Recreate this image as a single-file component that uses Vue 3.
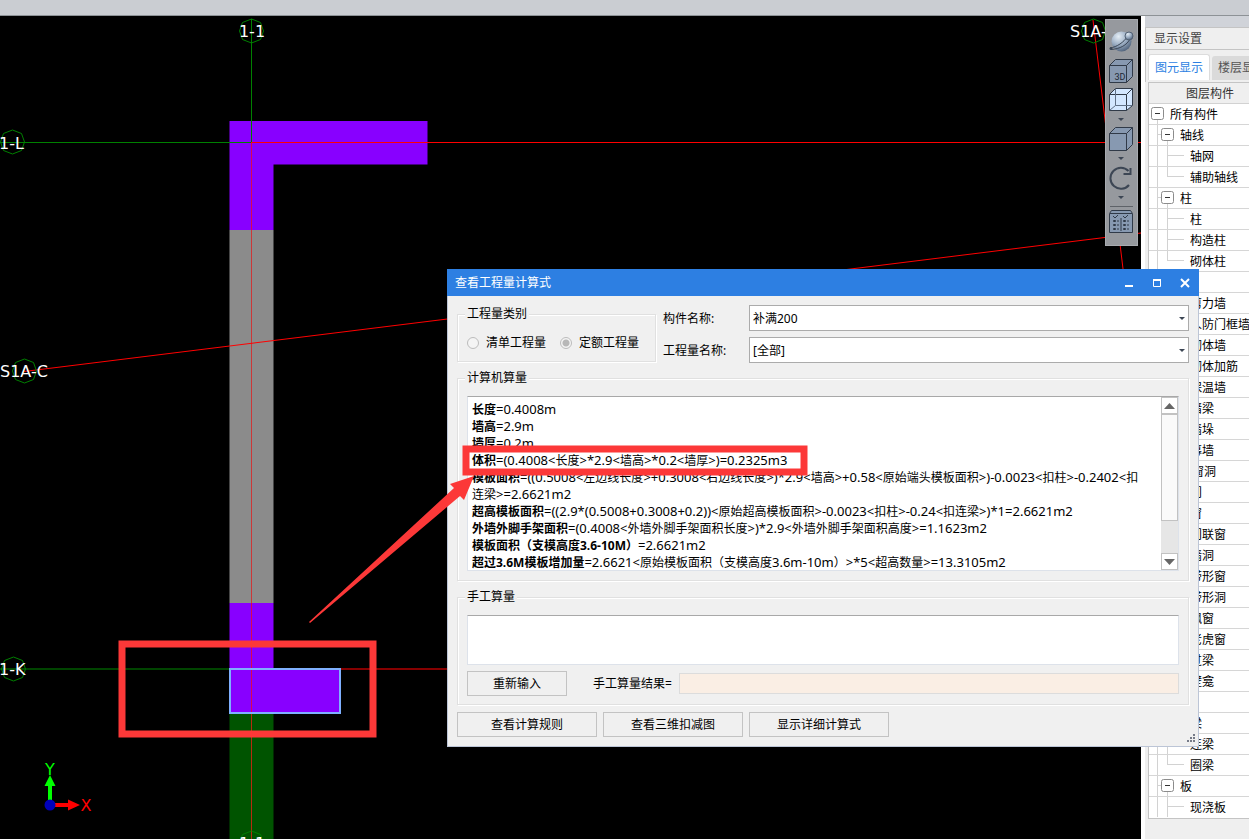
<script setup>
import { ref } from 'vue'

const kind = ref('quota')
const component = ref('补满200')
const quantity = ref('[全部]')

const groups = [
  ['轴线', ['轴网', '辅助轴线']],
  ['柱', ['柱', '构造柱', '砌体柱']],
  ['墙', ['剪力墙', '人防门框墙', '砌体墙', '砌体加筋', '保温墙', '暗梁', '墙垛', '幕墙']],
  ['门窗洞', ['门', '窗', '门联窗', '墙洞', '带形窗', '带形洞', '飘窗', '老虎窗', '过梁', '壁龛']],
  ['梁', ['梁', '连梁', '圈梁']],
  ['板', ['现浇板']],
]

const rows = [{ level: 0, name: '所有构件' }]
groups.forEach(([name, children], g) => {
  rows.push({ level: 1, name })
  children.forEach((child, i) => {
    const last = i === children.length - 1 && g !== groups.length - 1
    rows.push({ level: 2, name: child, last })
  })
})

// Expressions are cut into Latin and Chinese runs, which are set in different sizes.
const split = (text) => text.match(/[\x20-\x7e]+|[^\x20-\x7e]+/g).map((run) => ({
  run,
  latin: run.charCodeAt(0) < 127,
}))

const formulas = [
  ['长度', '=0.4008m'],
  ['墙高', '=2.9m'],
  ['墙厚', '=0.2m'],
  ['体积', '=(0.4008<长度>*2.9<墙高>*0.2<墙厚>)=0.2325m3'],
  ['模板面积', '=((0.5008<左边线长度>+0.3008<右边线长度>)*2.9<墙高>+0.58<原始端头模板面积>)-0.0023<扣柱>-0.2402<扣连梁>=2.6621m2'],
  ['超高模板面积', '=((2.9*(0.5008+0.3008+0.2))<原始超高模板面积>-0.0023<扣柱>-0.24<扣连梁>)*1=2.6621m2'],
  ['外墙外脚手架面积', '=(0.4008<外墙外脚手架面积长度>)*2.9<外墙外脚手架面积高度>=1.1623m2'],
  ['模板面积（支模高度3.6-10M）', '=2.6621m2'],
  ['超过3.6M模板增加量', '=2.6621<原始模板面积（支模高度3.6m-10m）>*5<超高数量>=13.3105m2'],
].map(([name, text]) => ({ name, runs: split(text) }))
</script>

<template>
  <div class="app">
    <header class="ribbon"></header>
    <div class="workspace">
      <main class="viewport">
        <svg class="drawing" width="1141" height="823" viewBox="0 16 1141 823">
          <g class="walls">
            <path fill="#8800ff" d="M229.500 121H427.500V164.500H273.500V230H229.500Z" />
            <path fill="#8b8b8b" d="M229.500 230h44v373h-44Z" />
            <path fill="#8800ff" d="M229.500 603h44v66h-44Z" />
            <path fill="#005400" d="M229.500 713h44v126h-44Z" />
            <rect x="230" y="669" width="110" height="44" fill="#8800ff" />
          </g>
          <g fill="none" stroke-width="1">
            <path stroke="#008000" d="M251.500 19V142.500M0 142.500H251" />
            <path stroke="#004400" d="M0 669H230" stroke-width="2" />
            <path stroke="#ff0000" d="M251 142.500H1141" />
            <path stroke="#d80850" d="M251.500 143V230M251.500 603V713" />
            <path stroke="#cc3838" d="M251.500 230V603" />
            <path stroke="#b82a10" d="M251.500 713V839" />
            <path stroke="#860000" stroke-width="2" d="M340 669H1141" />
            <path stroke="#ff0000" d="M1093 20L1124 277M24 371.500L1141 233" />
          </g>
          <rect x="230" y="669" width="110" height="44" fill="none" stroke="#7fb0ff" stroke-width="2" />
          <g fill="none" stroke="#008000">
            <path id="bubble" d="M251.500 19l9 3.500l3 8.500l-3 8.500l-9 3.500l-9-3.500l-3-8.500l3-8.500Z" />
            <use href="#bubble" x="-239" y="111" />
            <use href="#bubble" x="-227" y="340" />
            <use href="#bubble" x="-238" y="638" />
            <use href="#bubble" x="842" y="0" />
            <use href="#bubble" x="0" y="812" />
          </g>
          <g class="axis-text">
            <text x="252" y="37" text-anchor="middle">1-1</text>
            <text x="-1" y="149">1-L</text>
            <text x="0" y="377">S1A-C</text>
            <text x="-1" y="675">1-K</text>
            <text x="1070" y="37">S1A-C</text>
            <text x="252" y="849" text-anchor="middle">1-1</text>
          </g>
          <path fill="#00ff00" d="M48 801V786H44.500L50 775L55.500 786H52V801Z" />
          <path fill="#ff0000" d="M55 803H68V799.500L80 805L68 810.500V807H55Z" />
          <circle cx="50" cy="805" r="5.500" fill="#0000bb" />
          <text class="ucs" x="50" y="775" text-anchor="middle" fill="#00ff00">Y</text>
          <text class="ucs" x="86" y="811" text-anchor="middle" fill="#ff0000">X</text>
        </svg>

        <nav class="tools">
          <button type="button" aria-label="动态观察">
            <svg width="26" height="26" viewBox="0 0 26 26">
              <defs>
                <radialGradient id="ball" cx=".35" cy=".25" r=".8">
                  <stop offset="0" stop-color="#e4edf5" />
                  <stop offset=".5" stop-color="#9fb1c6" />
                  <stop offset="1" stop-color="#4c5f78" />
                </radialGradient>
              </defs>
              <circle cx="13.500" cy="13.500" r="10" fill="url(#ball)" />
              <path d="M2 20C9 19 16 14 19 9M3 21.500C12 21 19 17 22 11" fill="none" stroke="#3b4757" />
              <circle cx="21" cy="8" r="4" fill="url(#ball)" stroke="#526174" />
              <circle cx="3" cy="20.500" r="1.500" fill="#3b4757" />
            </svg>
          </button>
          <button type="button" aria-label="三维">
            <svg width="26" height="26" viewBox="0 0 26 26">
              <path d="M1.500 7.500L7.500 1.500H24.500V18.500L18.500 24.500H1.500Z" fill="#8799b1" stroke="#303a48" />
              <path d="M1.500 7.500H18.500V24.500M18.500 7.500L24.500 1.500" fill="none" stroke="#303a48" />
              <text x="12" y="22" class="cube-text">3D</text>
            </svg>
          </button>
          <button type="button" class="drop" aria-label="线框">
            <svg width="26" height="26" viewBox="0 0 26 26">
              <path d="M1.500 7.500L7.500 1.500H24.500V18.500L18.500 23.500H1.500Z" fill="#d3e7ff" stroke="#303a48" />
              <path d="M1.500 7.500H18.500V23.500M18.500 7.500L24.500 1.500" fill="none" stroke="#303a48" />
              <path d="M7.500 2V18.500H24M7.500 18.500L2 23" fill="none" stroke="#607086" />
            </svg>
            <i class="caret"></i>
          </button>
          <button type="button" class="drop" aria-label="实体">
            <svg width="26" height="26" viewBox="0 0 26 26">
              <path d="M1.500 7.500L7.500 1.500H24.500V18.500L18.500 24.500H1.500Z" fill="#8799b1" stroke="#303a48" />
              <path d="M1.500 7.500H18.500V24.500M18.500 7.500L24.500 1.500" fill="none" stroke="#303a48" />
            </svg>
            <i class="caret"></i>
          </button>
          <button type="button" class="drop" aria-label="旋转">
            <svg width="26" height="26" viewBox="0 0 26 26">
              <path d="M21 20A10.500 10.500 0 1 1 20.500 6" fill="none" stroke="#3c4654" stroke-width="2" />
              <path d="M22.500 3V9H15.500" fill="none" stroke="#3c4654" stroke-width="2" />
            </svg>
            <i class="caret"></i>
          </button>
          <hr>
          <button type="button" aria-label="显示设置">
            <svg width="26" height="26" viewBox="0 0 26 26">
              <path d="M1.500 4.500L3.500 1.500H22.500L24.500 4.500V23.500H1.500Z" fill="#8799b1" stroke="#303a48" />
              <path d="M2 4.500H24M13 9V22" stroke="#303a48" />
              <path d="M5 7l2 2l3-3M15 7l2 2l3-3" fill="none" stroke="#303a48" />
              <path d="M5.500 11.500h2v1h-2ZM5.500 15.500h2v1h-2ZM5.500 19.500h2v1h-2ZM15.500 11.500h2v1h-2ZM15.500 15.500h2v1h-2ZM15.500 19.500h2v1h-2ZM9 12h2M9 16h2M9 20h2M19 12h2M19 16h2M19 20h2" fill="none" stroke="#303a48" />
            </svg>
          </button>
        </nav>
      </main>

      <aside class="panel">
        <div class="strip"></div>
        <h2>显示设置</h2>
        <div class="tabs" role="tablist">
          <button type="button" role="tab" class="tab active" aria-selected="true">图元显示</button>
          <button type="button" role="tab" class="tab" aria-selected="false">楼层显示</button>
        </div>
        <div class="tree">
          <div class="tree-head">图层构件</div>
          <ul>
            <li v-for="(row, i) in rows" :key="i">
              <svg v-if="row.level === 0" width="20" height="20">
                <path d="M8.500 16V20" />
                <rect x="2.500" y="3.500" width="12" height="12" rx="2" />
                <path class="minus" d="M6 9.500H11" />
              </svg>
              <svg v-else-if="row.level === 1" width="30" height="20">
                <path d="M8.500 0V20M8.500 9.500H12M18.500 16V20" />
                <rect x="12.500" y="3.500" width="12" height="12" rx="2" />
                <path class="minus" d="M16 9.500H21" />
              </svg>
              <svg v-else width="40" height="20">
                <path d="M8.500 0V20M18.500 9.500H35" />
                <path :d="row.last ? 'M18.5 0V10' : 'M18.5 0V20'" />
              </svg>
              <span>{{ row.name }}</span>
            </li>
          </ul>
        </div>
      </aside>
    </div>

    <section class="dialog" role="dialog" aria-labelledby="dialog-title">
      <div class="titlebar">
        <h1 id="dialog-title">查看工程量计算式</h1>
        <button type="button" aria-label="最小化"><svg width="12" height="12"><path d="M2 9H10" stroke-width="2" /></svg></button>
        <button type="button" aria-label="最大化"><svg width="12" height="12"><path d="M2.500 3V9.500H9.500V3" /><path d="M2 3H10" stroke-width="2" /></svg></button>
        <button type="button" aria-label="关闭"><svg width="12" height="12"><path d="M2 2L10 10M10 2L2 10" stroke-width="2" /></svg></button>
      </div>
      <div class="body">
        <div class="top">
          <fieldset class="kinds">
            <legend>工程量类别</legend>
            <div class="radios">
              <label><input v-model="kind" type="radio" name="kind" value="list" disabled>清单工程量</label>
              <label><input v-model="kind" type="radio" name="kind" value="quota" disabled>定额工程量</label>
            </div>
          </fieldset>
          <div class="fields">
            <label for="component">构件名称:</label>
            <div class="select">
              <select id="component" v-model="component"><option>补满200</option></select>
              <i class="caret"></i>
            </div>
            <label for="quantity">工程量名称:</label>
            <div class="select">
              <select id="quantity" v-model="quantity"><option>[全部]</option></select>
              <i class="caret"></i>
            </div>
          </div>
        </div>

        <fieldset>
          <legend>计算机算量</legend>
          <div class="result">
            <div class="lines">
              <p v-for="line in formulas" :key="line.name"><b>{{ line.name }}</b><span v-for="(part, i) in line.runs" :key="i" :class="{ latin: part.latin }">{{ part.run }}</span></p>
            </div>
            <div class="scroll">
              <button type="button" aria-label="向上滚动"><svg width="11" height="6"><path d="M0 6L5.500 0L11 6Z" /></svg></button>
              <div class="thumb"></div>
              <div class="track"></div>
              <button type="button" aria-label="向下滚动"><svg width="11" height="6"><path d="M0 0L5.500 6L11 0Z" /></svg></button>
            </div>
          </div>
        </fieldset>

        <fieldset class="manual">
          <legend>手工算量</legend>
          <textarea aria-label="手工算量"></textarea>
          <div class="manual-row">
            <button type="button" class="btn small">重新输入</button>
            <label for="manual-result">手工算量结果=</label>
            <input id="manual-result" type="text" readonly>
          </div>
        </fieldset>

        <div class="actions">
          <button type="button" class="btn">查看计算规则</button>
          <button type="button" class="btn">查看三维扣减图</button>
          <button type="button" class="btn">显示详细计算式</button>
        </div>
      </div>
      <svg class="grip" width="10" height="10"><path d="M7 0h2v2h-2ZM4 3h2v2h-2ZM7 3h2v2h-2ZM1 6h2v2h-2ZM4 6h2v2h-2ZM7 6h2v2h-2Z" fill="#767b88" /></svg>
    </section>

    <svg class="markup" width="1249" height="839" viewBox="0 0 1249 839">
      <g fill="none" stroke="#fc3838" stroke-width="7">
        <rect x="122" y="644" width="251" height="90" />
        <rect x="466" y="449" width="338" height="23" />
      </g>
      <path fill="#fc3838" d="M309 622L454 488L450 484L474 476L464 500L460 496L310 623Z" />
    </svg>
  </div>
</template>

<style>
body {
  margin: 0;
  overflow: hidden;
}
</style>

<style scoped>
.app {
  position: relative;
  display: flex;
  flex-direction: column;
  height: 100vh;
  overflow: hidden;
  background: #000;
  color: #000;
  font: 12px/18px "Noto Sans", "Noto Sans CJK SC", sans-serif;
}
* {
  box-sizing: border-box;
}
button, input, select, textarea {
  margin: 0;
  font: inherit;
  color: inherit;
}
.ribbon {
  flex: none;
  height: 16px;
  background: #cacdd2;
  border-bottom: 1px solid #8d9296;
}
.workspace {
  display: flex;
  flex: 1;
  min-height: 0;
}
.viewport {
  position: relative;
  flex: 1;
  min-width: 0;
  overflow: hidden;
}
.drawing {
  display: block;
}
.axis-text {
  fill: #fff;
  font: 16px "DejaVu Sans", sans-serif;
}
.ucs {
  font: 16px "DejaVu Sans", sans-serif;
}
.tools {
  position: absolute;
  top: 3px;
  right: 3px;
  width: 33px;
  padding: 7px 2px 7px 0;
  background: #96999e;
  border: 1px solid #a8abb0;
}
.tools button {
  display: flex;
  flex-direction: column;
  align-items: center;
  width: 100%;
  padding: 1px 0 3px;
  background: none;
  border: 0;
}
.tools .drop {
  padding-top: 0;
}
.tools svg {
  display: block;
}
.tools hr {
  margin: 2px 2px 1px 4px;
  border: 0;
  border-top: 1px solid #5e6268;
}
.caret {
  border: 3px solid transparent;
  border-top-color: #3c4654;
  border-bottom: 0;
}
.tools .caret {
  margin: 5px 0 2px;
}
.cube-text {
  font: 9px Roboto, sans-serif;
  text-anchor: middle;
  fill: #202833;
}
.panel {
  flex: none;
  width: 108px;
  overflow: hidden;
  background: #efefef;
  border-left: 4px solid #fff;
  white-space: nowrap;
}
.strip {
  height: 11px;
  background: #d0d3d9;
}
.panel h2 {
  margin: 0;
  padding: 0 8px;
  border: solid #c4c4c4;
  border-width: 1px 0 1px 1px;
  font-size: 12px;
  font-weight: 400;
  line-height: 21px;
  color: #444;
}
.tabs {
  display: flex;
  align-items: flex-end;
  gap: 2px;
  height: 32px;
  padding: 4px 0 2px 2px;
  border-left: 1px solid #c4c4c4;
}
.tab {
  flex: none;
  height: 24px;
  padding: 0 6px;
  background: #dadada;
  border: 0;
  border-radius: 3px 3px 0 0;
  color: #555;
}
.tab.active {
  height: 26px;
  background: #fff;
  border: 1px solid #dcdcdc;
  border-bottom: 0;
  color: #2d7fe2;
}
.tree {
  margin-left: 3px;
  border: solid #c4c4c4;
  border-width: 1px 0 1px 1px;
  background: #fff;
}
.tree-head {
  height: 21px;
  padding-left: 37px;
  background: #efefef;
  border-bottom: 1px solid #d2d2d2;
  line-height: 21px;
  color: #333;
}
.tree ul {
  margin: 0;
  padding: 0;
  list-style: none;
}
.tree li {
  display: flex;
  gap: 1px;
  height: 21px;
  border-bottom: 1px solid #d6d6d6;
  line-height: 22px;
}
.tree li:last-child {
  border-bottom: 0;
}
.tree li svg {
  flex: none;
  fill: none;
  stroke: #d2d2d2;
}
.tree li rect {
  fill: #fff;
  stroke: #8c8c8c;
}
.tree li .minus {
  stroke: #333;
}
.dialog {
  position: absolute;
  top: 269px;
  left: 447px;
  width: 752px;
  background: #f0f0f0;
  border: 1px solid #bcc5d6;
  border-top: 0;
}
.titlebar {
  display: flex;
  align-items: center;
  gap: 16px;
  height: 27px;
  margin: 0 -1px;
  padding: 0 8px;
  background: #2d7fe2;
  color: #fff;
}
.titlebar h1 {
  flex: 1;
  margin: 0;
  font-size: 12px;
  font-weight: 400;
}
.titlebar button {
  display: flex;
  padding: 0;
  background: none;
  border: 0;
}
.titlebar svg {
  fill: none;
  stroke: #fff;
}
.body {
  display: flex;
  flex-direction: column;
  gap: 7px;
  padding: 9px;
}
.top {
  display: flex;
  gap: 7px;
  height: 57px;
}
fieldset {
  min-width: 0;
  margin: 0;
  padding: 9px;
  border: 1px solid #e0e0e0;
  box-shadow: inset 1px 1px #fff, 1px 1px #fff;
}
legend {
  height: 18px;
  margin-left: -2px;
  padding: 0 2px;
  background: #f0f0f0;
}
.kinds {
  flex: none;
  width: 199px;
  height: 57px;
  padding: 0 9px;
}
.radios {
  display: flex;
  gap: 14px;
  height: 40px;
}
.radios label {
  display: flex;
  align-items: center;
  gap: 7px;
}
.radios input {
  appearance: none;
  width: 12px;
  height: 12px;
  background: #f4f4f4;
  border: 1px solid #bcbcbc;
  border-radius: 50%;
}
.radios input:checked {
  background: radial-gradient(circle, #b8b8b8 3px, #f4f4f4 4px);
}
.fields {
  flex: 1;
  display: grid;
  grid-template-columns: 80px 1fr;
  gap: 6px;
  align-content: start;
  align-items: center;
}
.fields label {
  padding-top: 2px;
}
.select {
  position: relative;
}
.select select {
  display: block;
  appearance: none;
  width: 100%;
  height: 26px;
  padding: 2px 3px 0;
  background: #fff;
  border: 1px solid #ababab;
  border-radius: 0;
}
.select .caret {
  position: absolute;
  top: 12px;
  right: 4px;
  pointer-events: none;
}
.result {
  display: flex;
  height: 175px;
  background: #fff;
  border: 1px solid #dde2ea;
  border-top-color: #a8a8a8;
}
.lines {
  flex: 1;
  padding: 4px 14px 0 4px;
  overflow: hidden;
  line-height: 17px;
}
.lines p {
  margin: 0;
  word-break: break-all;
}
.latin {
  font-size: 13px;
  line-height: 16px;
}
.scroll {
  display: flex;
  flex-direction: column;
  width: 17px;
  background: #e6e6e6;
}
.scroll button {
  display: flex;
  align-items: center;
  justify-content: center;
  height: 17px;
  padding: 0;
  background: #fff;
  border: 1px solid #c2c2c2;
}
.scroll svg {
  fill: #666;
}
.thumb {
  height: 107px;
  background: #fafafa;
  border: 1px solid #c2c2c2;
}
.track {
  flex: 1;
}
.manual {
  padding-bottom: 8px;
}
.manual textarea {
  display: block;
  width: 100%;
  height: 50px;
  background: #fff;
  border: 1px solid #dde2ea;
  border-top-color: #a8a8a8;
  resize: none;
}
.manual-row {
  display: flex;
  align-items: center;
  margin-top: 6px;
}
.manual-row label {
  margin: 0 7px 0 26px;
}
.manual-row input {
  flex: 1;
  height: 21px;
  background: #faeee4;
  border: 1px solid #dcdcdc;
}
.actions {
  display: flex;
  gap: 6px;
}
.btn {
  width: 140px;
  height: 25px;
  padding: 0;
  background: #f0f0f0;
  border: 1px solid #c3c3c3;
}
.btn.small {
  width: 100px;
}
.grip {
  position: absolute;
  right: 2px;
  bottom: 2px;
}
.markup {
  position: absolute;
  top: 0;
  left: 0;
  pointer-events: none;
}
</style>
